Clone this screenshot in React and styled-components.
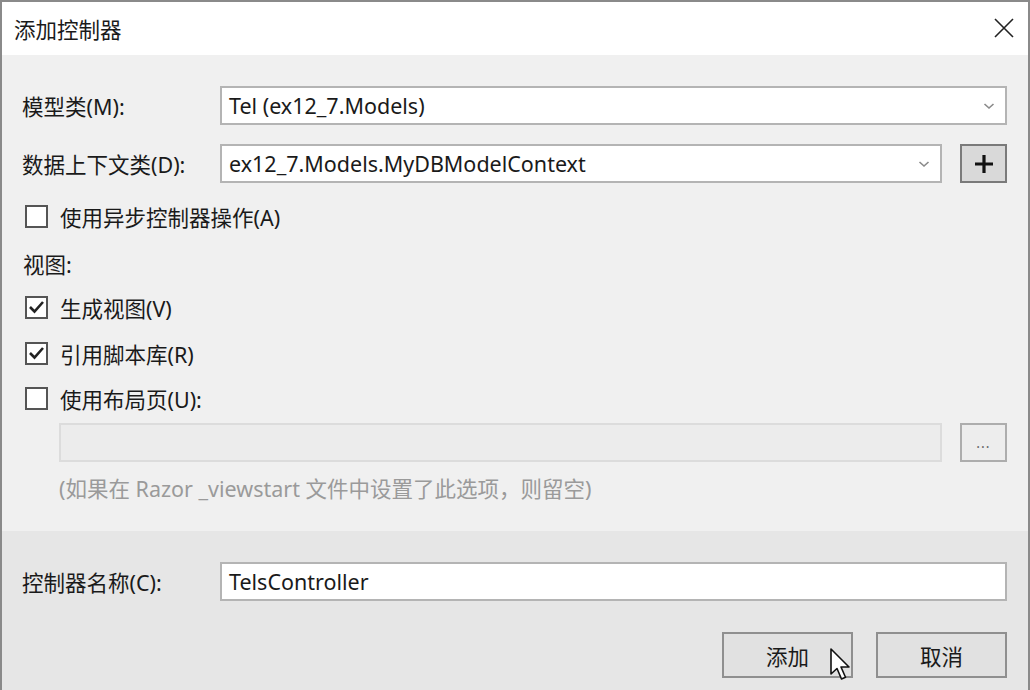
import React from "react";
import styled, { createGlobalStyle } from "styled-components";

const GlobalStyle = createGlobalStyle`
  html, body {
    margin: 0;
    padding: 0;
    background: #ffffff;
  }
  body {
    font-family: "Noto Sans", "Noto Sans CJK SC", sans-serif;
    color: #1a1a1a;
  }
`;

const Window = styled.div`
  width: 1030px;
  height: 690px;
  box-sizing: border-box;
  border: 2px solid #8a8a8a;
  border-bottom: none;
  display: flex;
  flex-direction: column;
  overflow: hidden;
`;

const TitleBar = styled.div`
  height: 53px;
  flex-shrink: 0;
  background: #ffffff;
  display: flex;
  align-items: center;
  justify-content: space-between;
  padding: 0 12px 0 12px;
  font-size: 21.5px;
`;

const CloseButton = styled.div`
  width: 24px;
  height: 24px;
  display: flex;
  align-items: center;
  justify-content: center;
  margin-bottom: 2px;
`;

const Body = styled.div`
  background: #f0f0f0;
  height: 476px;
  flex-shrink: 0;
  display: flex;
  flex-direction: column;
  padding: 0 21px 0 20px;
`;

const Footer = styled.div`
  flex: 1;
  background: #e6e6e6;
  display: flex;
  flex-direction: column;
  padding: 0 21px 0 20px;
  position: relative;
`;

const FieldRow = styled.div`
  display: flex;
  align-items: center;
  height: 39px;
  margin-top: ${({ $mt }) => $mt}px;
`;

const Label = styled.div`
  width: 198px;
  flex-shrink: 0;
  font-size: 21.5px;
  white-space: nowrap;
`;

const TextBox = styled.div`
  flex: 1;
  height: 39px;
  box-sizing: border-box;
  border: 2px solid ${({ $disabled }) => ($disabled ? "#dcdcdc" : "#b4b4b4")};
  background: ${({ $disabled }) => ($disabled ? "#ececec" : "#ffffff")};
  display: flex;
  align-items: center;
  justify-content: space-between;
  padding: 0 10px 0 7px;
  font-size: 21.5px;
  white-space: nowrap;
`;

const SideButton = styled.div`
  width: 47px;
  height: 39px;
  margin-left: 18px;
  box-sizing: border-box;
  border: 2px solid ${({ $strong }) => ($strong ? "#7a7a7a" : "#adadad")};
  background: ${({ $strong }) => ($strong ? "#d9d9d9" : "#ededed")};
  display: flex;
  align-items: center;
  justify-content: center;
  color: #666;
  font-size: 14px;
  letter-spacing: 1px;
  flex-shrink: 0;
`;

const CheckRow = styled.label`
  display: flex;
  align-items: center;
  height: 24px;
  margin-top: ${({ $mt }) => $mt}px;
  padding-left: 3px;
  font-size: 21.5px;
  gap: 12px;
`;

const Box = styled.span`
  width: 23px;
  height: 23px;
  box-sizing: border-box;
  border: 2px solid #555;
  background: #ffffff;
  display: flex;
  align-items: center;
  justify-content: center;
`;

const SectionLabel = styled.div`
  height: 24px;
  display: flex;
  align-items: center;
  margin-top: ${({ $mt }) => $mt}px;
  padding-left: 1px;
  font-size: 21.5px;
`;

const Indented = styled.div`
  display: flex;
  align-items: center;
  padding-left: 37px;
  margin-top: ${({ $mt }) => $mt}px;
`;

const Hint = styled.div`
  height: 24px;
  display: flex;
  align-items: center;
  padding-left: 37px;
  margin-top: ${({ $mt }) => $mt}px;
  color: #9a9a9a;
  font-size: 21.5px;
  white-space: nowrap;
`;

const ButtonRow = styled.div`
  display: flex;
  justify-content: flex-end;
  gap: 23px;
  margin-top: 31px;
`;

const DialogButton = styled.div`
  width: 131px;
  height: 46px;
  box-sizing: border-box;
  border: 2px solid #8f8f8f;
  background: #e1e1e1;
  display: flex;
  align-items: center;
  justify-content: center;
  font-size: 21.5px;
`;

const Cursor = styled.svg`
  position: absolute;
  left: 827px;
  top: 116px;
`;

function Chevron() {
  return (
    <svg width="12" height="8" viewBox="0 0 12 8">
      <path d="M1.5 2 L6 6 L10.5 2" fill="none" stroke="#8a8a8a" strokeWidth="1.6" />
    </svg>
  );
}

function Checkbox({ checked }) {
  return (
    <Box>
      {checked && (
        <svg width="17" height="14" viewBox="0 0 17 14">
          <path d="M2 7 L6.5 11.5 L15 2" fill="none" stroke="#222" strokeWidth="2.6" />
        </svg>
      )}
    </Box>
  );
}

export default function App() {
  return (
    <>
      <GlobalStyle />
      <Window>
        <TitleBar>
          <span>添加控制器</span>
          <CloseButton>
            <svg width="20" height="20" viewBox="0 0 20 20">
              <path d="M1 1 L19 19 M19 1 L1 19" stroke="#222" strokeWidth="1.6" />
            </svg>
          </CloseButton>
        </TitleBar>
        <Body>
          <FieldRow $mt={31}>
            <Label>模型类(M):</Label>
            <TextBox>
              <span>Tel (ex12_7.Models)</span>
              <Chevron />
            </TextBox>
          </FieldRow>
          <FieldRow $mt={19}>
            <Label>数据上下文类(D):</Label>
            <TextBox>
              <span>ex12_7.Models.MyDBModelContext</span>
              <Chevron />
            </TextBox>
            <SideButton $strong>
              <svg width="20" height="20" viewBox="0 0 20 20">
                <path d="M10 1 V19 M1 10 H19" stroke="#111" strokeWidth="3.2" />
              </svg>
            </SideButton>
          </FieldRow>
          <CheckRow $mt={21}>
            <Checkbox />
            <span>使用异步控制器操作(A)</span>
          </CheckRow>
          <SectionLabel $mt={23}>视图:</SectionLabel>
          <CheckRow $mt={20}>
            <Checkbox checked />
            <span>生成视图(V)</span>
          </CheckRow>
          <CheckRow $mt={22}>
            <Checkbox checked />
            <span>引用脚本库(R)</span>
          </CheckRow>
          <CheckRow $mt={21}>
            <Checkbox />
            <span>使用布局页(U):</span>
          </CheckRow>
          <Indented $mt={13}>
            <TextBox $disabled />
            <SideButton>...</SideButton>
          </Indented>
          <Hint $mt={13}>(如果在 Razor _viewstart 文件中设置了此选项，则留空)</Hint>
        </Body>
        <Footer>
          <FieldRow $mt={31}>
            <Label>控制器名称(C):</Label>
            <TextBox>
              <span>TelsController</span>
            </TextBox>
          </FieldRow>
          <ButtonRow>
            <DialogButton>添加</DialogButton>
            <DialogButton>取消</DialogButton>
          </ButtonRow>
          <Cursor width="26" height="36" viewBox="0 0 26 36">
            <path
              d="M2 2 L2 27 L8 21.5 L12.5 32 L16.5 30.3 L12 20 L20 20 Z"
              fill="#ffffff"
              stroke="#111"
              strokeWidth="1.6"
              strokeLinejoin="round"
            />
          </Cursor>
        </Footer>
      </Window>
    </>
  );
}
